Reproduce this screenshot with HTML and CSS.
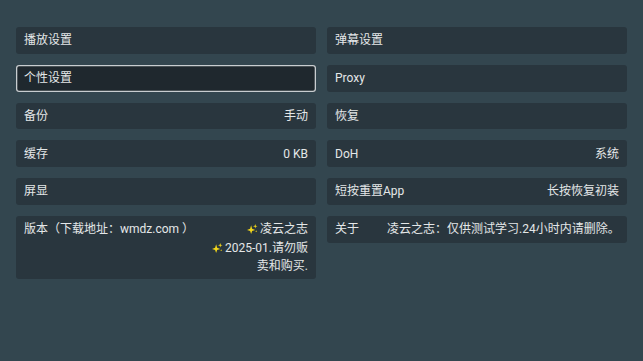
FILE: index.html
```html
<!DOCTYPE html>
<html lang="zh">
<head>
<meta charset="utf-8">
<link rel="stylesheet" href="styles.css">
</head>
<body>
<div class="grid">
  <div class="row"><span class="label">播放设置</span></div>
  <div class="row"><span class="label">弹幕设置</span></div>
  <div class="row focused"><span class="label">个性设置</span></div>
  <div class="row"><span class="label">Proxy</span></div>
  <div class="row"><span class="label">备份</span><span class="value">手动</span></div>
  <div class="row"><span class="label">恢复</span></div>
  <div class="row"><span class="label">缓存</span><span class="value">0 KB</span></div>
  <div class="row"><span class="label">DoH</span><span class="value">系统</span></div>
  <div class="row"><span class="label">屏显</span></div>
  <div class="row"><span class="label">短按重置App</span><span class="value">长按恢复初装</span></div>
  <div class="row"><span class="label">版本（下载地址：wmdz.com ）</span><span class="value multi"><svg class="spark" viewBox="0 0 12 12"><path d="M4.5 2.5 L5.6 6.4 L9 7.5 L5.6 8.6 L4.5 12 L3.4 8.6 L0 7.5 L3.4 6.4 Z"/><path d="M9 1 L9.6 2.9 L11.5 3.5 L9.6 4.1 L9 6 L8.4 4.1 L6.5 3.5 L8.4 2.9 Z"/><path d="M10 7.8 L10.4 8.6 L11.2 9 L10.4 9.4 L10 10.2 L9.6 9.4 L8.8 9 L9.6 8.6 Z"/></svg>凌云之志<br><svg class="spark" viewBox="0 0 12 12"><path d="M4.5 2.5 L5.6 6.4 L9 7.5 L5.6 8.6 L4.5 12 L3.4 8.6 L0 7.5 L3.4 6.4 Z"/><path d="M9 1 L9.6 2.9 L11.5 3.5 L9.6 4.1 L9 6 L8.4 4.1 L6.5 3.5 L8.4 2.9 Z"/><path d="M10 7.8 L10.4 8.6 L11.2 9 L10.4 9.4 L10 10.2 L9.6 9.4 L8.8 9 L9.6 8.6 Z"/></svg>2025-01.请勿贩<br>卖和购买.</span></div>
  <div class="row"><span class="label">关于</span><span class="about">凌云之志：仅供测试学习.24小时内请删除。</span></div>
</div>
</body>
</html>
```
FILE: styles.css
```css
html, body {
  margin: 0;
  padding: 0;
}
body {
  width: 643px;
  height: 361px;
  background: #33464f;
  font-family: Roboto, "Noto Sans CJK SC", sans-serif;
  font-size: 12px;
  color: #e4e7e8;
  overflow: hidden;
}
.grid {
  display: grid;
  grid-template-columns: 300px 300px;
  column-gap: 11px;
  row-gap: 11px;
  align-items: start;
  padding: 27px 16px 0 16px;
}
.row {
  display: flex;
  justify-content: space-between;
  align-items: flex-start;
  background: #29363e;
  border-radius: 3px;
  padding: 4.25px 8px;
  line-height: 18.3px;
  white-space: nowrap;
}
.row.focused {
  background: #1f282e;
  box-shadow: inset 0 0 0 1.3px #c8cdd0;
}
.value {
  text-align: right;
}
.about {
  margin-left: 28px;
  flex: 1;
}
.spark {
  width: 11px;
  height: 11px;
  fill: #f3d71a;
  vertical-align: -1px;
  margin-right: 2px;
}
```
